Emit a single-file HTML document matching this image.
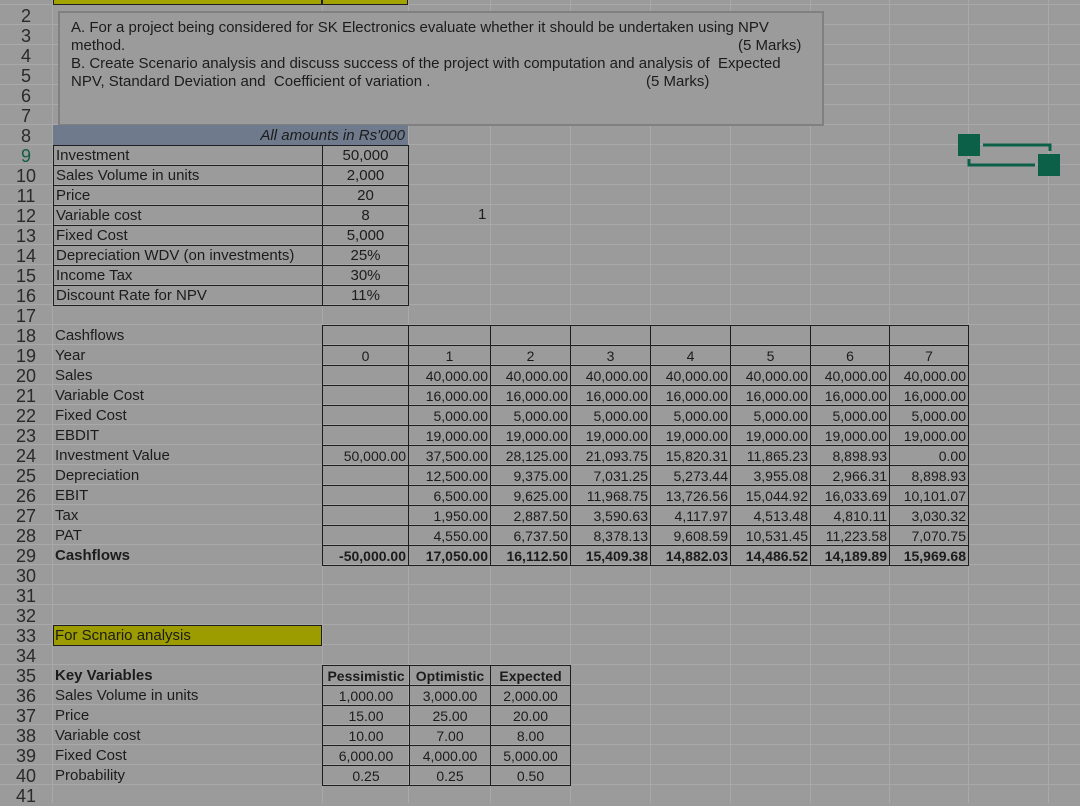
<!DOCTYPE html>
<html><head><meta charset="utf-8"><style>
*{margin:0;padding:0;box-sizing:border-box}
body{width:1080px;height:803px;overflow:hidden;background:#9b9b9b;font-family:"Liberation Sans",Arial,sans-serif;color:#1c1c1c;position:relative}
.grid{position:absolute;left:0;top:0;width:1080px;height:803px;
background-image:repeating-linear-gradient(to bottom,transparent 0 4px,#a9a9a9 4px 5px,transparent 5px 20px);}
.v{position:absolute;top:0;height:803px;width:1px;background:#a9a9a9}
.rn{position:absolute;left:0;width:52px;text-align:center;font-size:18px;color:#2a2a2a;line-height:20px}
.lb{position:absolute;left:55px;font-size:15px;line-height:20px;white-space:nowrap}
table{position:absolute;border-collapse:collapse;font-size:14px;table-layout:fixed}
td{border:1.5px solid #1e1e1e;height:20px;padding:0 2px;line-height:18px;white-space:nowrap;overflow:hidden}
.r td{text-align:right}
.c td{text-align:center}
.big td{font-size:15px}
</style></head><body>
<div class="grid"></div>
<div class="v" style="left:52px"></div><div class="v" style="left:322px"></div><div class="v" style="left:408px"></div><div class="v" style="left:490px"></div><div class="v" style="left:570px"></div><div class="v" style="left:650px"></div><div class="v" style="left:730px"></div><div class="v" style="left:810px"></div><div class="v" style="left:889px"></div><div class="v" style="left:968px"></div><div class="v" style="left:1048px"></div>

<div style="position:absolute;left:53px;top:-16px;width:355px;height:21px;background:#a3a300;border:1.5px solid #1e1e1e"></div>
<div style="position:absolute;left:321px;top:-16px;width:1.5px;height:21px;background:#1e1e1e"></div>

<div style="position:absolute;left:58px;top:11px;width:766px;height:115px;background:#9b9b9b;border:2px solid #808080;font-size:15px;line-height:18px;padding:6px 0 0 11px;color:#1c1c1c">
A. For a project being considered for SK Electronics evaluate whether it should be undertaken using NPV<br>method.<span style="position:absolute;left:678px;top:24px">(5 Marks)</span><br>B. Create Scenario analysis and discuss success of the project with computation and analysis of&nbsp; Expected<br>NPV, Standard Deviation and&nbsp; Coefficient of variation .<span style="position:absolute;left:586px;top:60px">(5 Marks)</span>
</div>

<div style="position:absolute;left:53px;top:125px;width:355px;height:20px;background:#6f7b8c;font-size:15px;font-style:italic;text-align:right;padding-right:3px;line-height:21px">All amounts in Rs'000</div>

<table class="big" style="left:53px;top:145px;width:355px">
<colgroup><col style="width:269px"><col style="width:86px"></colgroup>
<tr><td>Investment</td><td style="text-align:center">50,000</td></tr>
<tr><td>Sales Volume in units</td><td style="text-align:center">2,000</td></tr>
<tr><td>Price</td><td style="text-align:center">20</td></tr>
<tr><td>Variable cost</td><td style="text-align:center">8</td></tr>
<tr><td>Fixed Cost</td><td style="text-align:center">5,000</td></tr>
<tr><td>Depreciation WDV (on investments)</td><td style="text-align:center">25%</td></tr>
<tr><td>Income Tax</td><td style="text-align:center">30%</td></tr>
<tr><td>Discount Rate for NPV</td><td style="text-align:center">11%</td></tr>
</table>
<div class="lb" style="left:478px;top:205px">1</div>

<div class="lb" style="top:326px">Cashflows</div>
<div class="lb" style="top:346px">Year</div>
<div class="lb" style="top:366px">Sales</div>
<div class="lb" style="top:386px">Variable Cost</div>
<div class="lb" style="top:406px">Fixed Cost</div>
<div class="lb" style="top:426px">EBDIT</div>
<div class="lb" style="top:446px">Investment Value</div>
<div class="lb" style="top:466px">Depreciation</div>
<div class="lb" style="top:486px">EBIT</div>
<div class="lb" style="top:506px">Tax</div>
<div class="lb" style="top:526px">PAT</div>
<div class="lb" style="top:546px;font-weight:bold">Cashflows</div>

<table class="r" style="left:322px;top:325px;width:646px">
<colgroup><col style="width:86px"><col style="width:82px"><col style="width:80px"><col style="width:80px"><col style="width:80px"><col style="width:80px"><col style="width:79px"><col style="width:79px"></colgroup>
<tr><td></td><td></td><td></td><td></td><td></td><td></td><td></td><td></td></tr>
<tr class="c"><td style="text-align:center">0</td><td style="text-align:center">1</td><td style="text-align:center">2</td><td style="text-align:center">3</td><td style="text-align:center">4</td><td style="text-align:center">5</td><td style="text-align:center">6</td><td style="text-align:center">7</td></tr>
<tr><td></td><td>40,000.00</td><td>40,000.00</td><td>40,000.00</td><td>40,000.00</td><td>40,000.00</td><td>40,000.00</td><td>40,000.00</td></tr>
<tr><td></td><td>16,000.00</td><td>16,000.00</td><td>16,000.00</td><td>16,000.00</td><td>16,000.00</td><td>16,000.00</td><td>16,000.00</td></tr>
<tr><td></td><td>5,000.00</td><td>5,000.00</td><td>5,000.00</td><td>5,000.00</td><td>5,000.00</td><td>5,000.00</td><td>5,000.00</td></tr>
<tr><td></td><td>19,000.00</td><td>19,000.00</td><td>19,000.00</td><td>19,000.00</td><td>19,000.00</td><td>19,000.00</td><td>19,000.00</td></tr>
<tr><td>50,000.00</td><td>37,500.00</td><td>28,125.00</td><td>21,093.75</td><td>15,820.31</td><td>11,865.23</td><td>8,898.93</td><td>0.00</td></tr>
<tr><td></td><td>12,500.00</td><td>9,375.00</td><td>7,031.25</td><td>5,273.44</td><td>3,955.08</td><td>2,966.31</td><td>8,898.93</td></tr>
<tr><td></td><td>6,500.00</td><td>9,625.00</td><td>11,968.75</td><td>13,726.56</td><td>15,044.92</td><td>16,033.69</td><td>10,101.07</td></tr>
<tr><td></td><td>1,950.00</td><td>2,887.50</td><td>3,590.63</td><td>4,117.97</td><td>4,513.48</td><td>4,810.11</td><td>3,030.32</td></tr>
<tr><td></td><td>4,550.00</td><td>6,737.50</td><td>8,378.13</td><td>9,608.59</td><td>10,531.45</td><td>11,223.58</td><td>7,070.75</td></tr>
<tr style="font-weight:bold"><td>-50,000.00</td><td>17,050.00</td><td>16,112.50</td><td>15,409.38</td><td>14,882.03</td><td>14,486.52</td><td>14,189.89</td><td>15,969.68</td></tr>
</table>

<div style="position:absolute;left:53px;top:625px;width:269px;height:21px;background:#9c9c00;border:1.5px solid #1e1e1e;font-size:15px;line-height:20px;padding-left:1px">For Scnario analysis</div>

<div class="lb" style="top:666px;font-weight:bold">Key Variables</div>
<div class="lb" style="top:686px">Sales Volume in units</div>
<div class="lb" style="top:706px">Price</div>
<div class="lb" style="top:726px">Variable cost</div>
<div class="lb" style="top:746px">Fixed Cost</div>
<div class="lb" style="top:766px">Probability</div>
<table class="c" style="left:322px;top:665px;width:248px">
<colgroup><col style="width:87px"><col style="width:81px"><col style="width:80px"></colgroup>
<tr style="font-weight:bold"><td>Pessimistic</td><td>Optimistic</td><td>Expected</td></tr>
<tr><td>1,000.00</td><td>3,000.00</td><td>2,000.00</td></tr>
<tr><td>15.00</td><td>25.00</td><td>20.00</td></tr>
<tr><td>10.00</td><td>7.00</td><td>8.00</td></tr>
<tr><td>6,000.00</td><td>4,000.00</td><td>5,000.00</td></tr>
<tr><td>0.25</td><td>0.25</td><td>0.50</td></tr>
</table>

<svg style="position:absolute;left:955px;top:130px" width="110" height="50">
<rect x="3" y="4" width="22" height="22" fill="#0d6048"/>
<rect x="83" y="24" width="22" height="22" fill="#0d6048"/>
<path d="M28 15 H95 V21" stroke="#0d6048" stroke-width="3" fill="none"/>
<path d="M14 29 V35 H80" stroke="#0d6048" stroke-width="3" fill="none"/>
</svg>

<div class="rn" style="top:6px">2</div><div class="rn" style="top:26px">3</div><div class="rn" style="top:46px">4</div><div class="rn" style="top:66px">5</div><div class="rn" style="top:86px">6</div><div class="rn" style="top:106px">7</div><div class="rn" style="top:126px">8</div><div class="rn" style="top:146px;color:#145c44">9</div><div class="rn" style="top:166px">10</div><div class="rn" style="top:186px">11</div><div class="rn" style="top:206px">12</div><div class="rn" style="top:226px">13</div><div class="rn" style="top:246px">14</div><div class="rn" style="top:266px">15</div><div class="rn" style="top:286px">16</div><div class="rn" style="top:306px">17</div><div class="rn" style="top:326px">18</div><div class="rn" style="top:346px">19</div><div class="rn" style="top:366px">20</div><div class="rn" style="top:386px">21</div><div class="rn" style="top:406px">22</div><div class="rn" style="top:426px">23</div><div class="rn" style="top:446px">24</div><div class="rn" style="top:466px">25</div><div class="rn" style="top:486px">26</div><div class="rn" style="top:506px">27</div><div class="rn" style="top:526px">28</div><div class="rn" style="top:546px">29</div><div class="rn" style="top:566px">30</div><div class="rn" style="top:586px">31</div><div class="rn" style="top:606px">32</div><div class="rn" style="top:626px">33</div><div class="rn" style="top:646px">34</div><div class="rn" style="top:666px">35</div><div class="rn" style="top:686px">36</div><div class="rn" style="top:706px">37</div><div class="rn" style="top:726px">38</div><div class="rn" style="top:746px">39</div><div class="rn" style="top:766px">40</div><div class="rn" style="top:786px">41</div>
</body></html>
